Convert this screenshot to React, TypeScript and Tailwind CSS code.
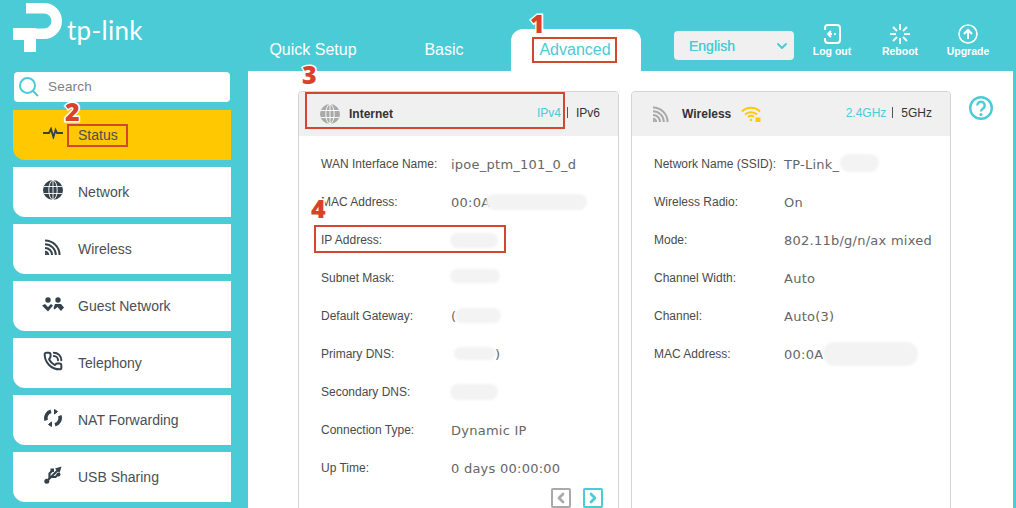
import { useState } from "react";
import { ChevronDown, ChevronLeft, ChevronRight, PhoneCall } from "lucide-react";

function GlobeIcon({ className }: { className?: string }) {
  return (
    <svg viewBox="0 0 20 20" className={className}>
      <circle cx="10" cy="10" r="10" fill="currentColor" />
      <g fill="none" stroke="white" strokeWidth="0.9">
        <ellipse cx="10" cy="10" rx="4.2" ry="9.6" />
        <path d="M10 0v20M0.6 6.5h18.8M0.6 13.5h18.8" />
      </g>
    </svg>
  );
}

function WifiCorner({ className }: { className?: string }) {
  return (
    <svg viewBox="0 0 17 17" className={className} fill="none" stroke="currentColor" strokeWidth="2.1">
      <path d="M0 1.500c8.500 0 15.500 7 15.500 15.500M0 5.500c6.300 0 11.500 5.200 11.500 11.500M0 9.500c4.100 0 7.500 3.400 7.500 7.500M0 13.500c1.900 0 3.500 1.600 3.500 3.500" />
      <rect x="0" y="15" width="2" height="2" fill="currentColor" stroke="none" />
    </svg>
  );
}

function ActivityIcon({ className }: { className?: string }) {
  return (
    <svg viewBox="0 0 20 12" className={className} fill="none" stroke="currentColor" strokeWidth="1.9">
      <path d="M0 6h6l2-4 2.400 8 2.200-7 1.400 3h6" />
    </svg>
  );
}

function GuestIcon({ className }: { className?: string }) {
  return (
    <svg viewBox="0 0 22 15" className={className} fill="currentColor">
      <circle cx="6" cy="3" r="2.700" />
      <circle cx="16" cy="3" r="2.700" />
      <path d="M0 8.500l3-1.500 3 3 3-3 2 1.500-5 6z" />
      <path d="M22 10.500l-3-3.500h-6l-1.500 4 1 1.500 3-2.500 3.500 4z" />
    </svg>
  );
}

function NatIcon({ className }: { className?: string }) {
  return (
    <svg viewBox="0 0 18 18" className={className} fill="none" stroke="currentColor" strokeWidth="3.600">
      <path d="M7 2.300a7 7 0 0 0-4.800 9" />
      <path d="M11 15.700a7 7 0 0 0 4.800-9" />
      <path d="M10.500 0.500l3 2-3 2.500z" fill="currentColor" strokeWidth="1" />
      <path d="M7.500 17.500l-3-2 3-2.500z" fill="currentColor" strokeWidth="1" />
    </svg>
  );
}

function UsbIcon({ className }: { className?: string }) {
  return (
    <svg viewBox="0 0 18 18" className={className} fill="none" stroke="currentColor" strokeWidth="2.200">
      <path d="M3 15L13.500 4.500" />
      <path d="M5.500 12.500V7.500L8 5" />
      <path d="M7 11h4.500L14 8.500" />
      <circle cx="2.800" cy="15.200" r="2.500" fill="currentColor" stroke="none" />
      <path d="M11 2.500L17.500 0.500 15.500 7z" fill="currentColor" stroke="none" />
      <rect x="6.500" y="2.500" width="3.500" height="3.500" fill="currentColor" stroke="none" />
      <circle cx="14.500" cy="8.500" r="2" fill="currentColor" stroke="none" />
    </svg>
  );
}

const menuItems = [
  { label: "Status", icon: <ActivityIcon className="w-5 h-3" />, active: true },
  { label: "Network", icon: <GlobeIcon className="w-5 h-5" /> },
  { label: "Wireless", icon: <WifiCorner className="w-4 h-4" /> },
  { label: "Guest Network", icon: <GuestIcon className="w-[22px] h-[15px]" /> },
  { label: "Telephony", icon: <PhoneCall className="w-5 h-5" strokeWidth={2.4} /> },
  { label: "NAT Forwarding", icon: <NatIcon className="w-[18px] h-[18px]" /> },
  { label: "USB Sharing", icon: <UsbIcon className="w-[18px] h-[18px]" /> },
];

function Smudge({ className }: { className: string }) {
  return <div className={`absolute bg-[#f3f3f3] rounded-full blur-[1px] ${className}`} />;
}

function InfoRow({ label, value, children }: { label: string; value?: string; children?: React.ReactNode }) {
  return (
    <div className="flex items-center h-[38px]">
      <div className="w-[130px] shrink-0 text-xs text-[#4a4a4a] -mt-[2px] whitespace-nowrap">{label}</div>
      <div className="relative flex-1 font-['DejaVu_Sans',sans-serif] text-[13px] tracking-[0.25px] text-[#666] whitespace-nowrap">
        {value ?? "\u00a0"}
        {children}
      </div>
    </div>
  );
}

function CardHead({ title, icon, extra, left, right }: { title: string; icon: React.ReactNode; extra?: React.ReactNode; left: string; right: string }) {
  return (
    <div className="h-[44px] bg-[#f0f0f0] flex items-center pl-[21px] pr-[18px] rounded-t-[4px]">
      <div className="w-[20px] text-[#a9a9a9]">{icon}</div>
      <div className="ml-[9px] text-xs font-bold text-[#333]">{title}</div>
      {extra}
      <div className="ml-auto flex items-center text-xs text-[#333] -mt-[3px]">
        <span className="text-[#4acbd6]">{left}</span>
        <span className="ml-[6px] mr-[8px] w-[1px] h-[11px] bg-[#555]" />
        <span>{right}</span>
      </div>
    </div>
  );
}

const redBox = "absolute border-2 border-[#d4472f] pointer-events-none";
const badge =
  "absolute font-['Open_Sans',sans-serif] font-extrabold text-[25px] leading-none text-[#d8412c] [-webkit-text-stroke:3px_white] [paint-order:stroke_fill]";

export default function App() {
  const [tab] = useState("Advanced");

  return (
    <div className="relative w-[1016px] h-[508px] overflow-hidden bg-[#4acbd6] font-['Liberation_Sans',sans-serif]">
      {/* Header */}
      <div className="flex h-[71px]">
        <div className="w-[248px] shrink-0 pl-[13px] pt-[3px] flex items-start">
          <svg viewBox="0 0 50 50" className="w-[50px] h-[50px] shrink-0" fill="white">
            <path d="M13 0H31A18 18 0 0 1 31 36H23V25.500H31A7.500 7.500 0 0 0 31 10.500H13Z" />
            <path d="M0 25H23V49H11V37H0Z" />
          </svg>
          <span className="ml-[4px] mt-[9px] font-['Lato',sans-serif] font-normal text-[26px] leading-[36px] tracking-[0.3px] text-white">
            tp-link
          </span>
        </div>
        <div className="flex items-end gap-[1px]">
          {["Quick Setup", "Basic"].map((t) => (
            <div key={t} className="w-[130px] h-[42px] flex items-center justify-center text-base text-white">
              {t}
            </div>
          ))}
          <div className="ml-[1px] w-[130px] h-[42px] bg-white rounded-t-[12px] flex items-center justify-center text-base text-[#4acbd6] pr-[2px]">
            {tab}
          </div>
        </div>
        <div className="ml-[33px] mt-[31px] w-[120px] h-[29px] rounded-[4px] bg-[#f0f0f0] flex items-center justify-between pl-[15px] pr-[4px] text-sm font-bold text-[#4acbd6]">
          <span className="font-normal [text-shadow:0_0_0.4px_#4acbd6]">English</span>
          <ChevronDown className="w-4 h-4" strokeWidth={3} />
        </div>
        <div className="flex ml-[4px] pt-[23px]">
          {[
            {
              label: "Log out",
              icon: (
                <svg viewBox="0 0 18 20" className="w-[18px] h-[20px]" fill="none" stroke="white" strokeWidth="2">
                  <path d="M5 1h9a3 3 0 0 1 3 3v12a3 3 0 0 1-3 3H5a3 3 0 0 1-3-3v-2M2 6V4a3 3 0 0 1 3-3" />
                  <path d="M8 7l-3 3 3 3M6 10h3M11 10h2" />
                </svg>
              ),
            },
            {
              label: "Reboot",
              icon: (
                <svg viewBox="0 0 20 20" className="w-5 h-5" fill="none" stroke="white" strokeWidth="2">
                  <path d="M10 0v6M10 14v6M0 10h6M14 10h6M3 3l4 4M13 13l4 4M17 3l-4 4M7 13l-4 4" />
                </svg>
              ),
            },
            {
              label: "Upgrade",
              icon: (
                <svg viewBox="0 0 20 20" className="w-5 h-5" fill="none" stroke="white" strokeWidth="1.600">
                  <circle cx="10" cy="10" r="9" />
                  <path d="M6 10l4-4 4 4M10 7v8" strokeWidth="2" />
                </svg>
              ),
            },
          ].map((a) => (
            <div key={a.label} className="w-[68px] flex flex-col items-center">
              <div className="h-[21px] flex items-center">{a.icon}</div>
              <div className="text-[10.5px] font-bold text-white">{a.label}</div>
            </div>
          ))}
        </div>
      </div>

      {/* Main */}
      <div className="flex h-[437px]">
        <div className="w-[248px] shrink-0">
          <div className="ml-[14px] mt-[1px] w-[216px] h-[30px] bg-white rounded-[4px] flex items-center pl-[5px]">
            <svg viewBox="0 0 20 20" className="w-[20px] h-[20px]" fill="none" stroke="#4acbd6" strokeWidth="2">
              <circle cx="8.500" cy="8.500" r="7.500" />
              <path d="M14 14l5 5" />
            </svg>
            <span className="ml-[9px] mt-[1px] text-[13.5px] text-[#808080] tracking-[0.2px]">Search</span>
          </div>
          <div className="mt-[8px] ml-[13px] w-[218px] flex flex-col gap-[7px]">
            {menuItems.map((m) => (
              <div
                key={m.label}
                className={`h-[50px] rounded-bl-[12px] flex text-sm text-[#4a4f55] pt-[14px] ${
                  m.active ? "bg-[#ffc800]" : "bg-white"
                }`}
              >
                <div className="w-[30px] ml-[25px] h-[20px] flex items-center justify-center text-[#36424b] -mt-[1px]">
                  {m.icon}
                </div>
                <span className="ml-[10px] mt-[1px]">{m.label}</span>
              </div>
            ))}
          </div>
        </div>

        <div className="flex-1 mr-[3px] bg-white flex pl-[50px] pt-[20px] gap-[12px]">
          {/* Internet */}
          <div className="w-[321px] h-[440px] shrink-0 border border-[#d4d4d4] rounded-t-[4px]">
            <CardHead title="Internet" left="IPv4" right="IPv6" icon={<GlobeIcon className="w-5 h-5" />} />
            <div className="pl-[22px] pt-[10px]">
              <InfoRow label="WAN Interface Name:" value="ipoe_ptm_101_0_d" />
              <InfoRow label="MAC Address:" value="00:0A">
                <Smudge className="left-[35px] top-[1px] w-[101px] h-[16px]" />
              </InfoRow>
              <InfoRow label="IP Address:">
                <Smudge className="-left-[1px] top-[2px] w-[48px] h-[15px]" />
              </InfoRow>
              <InfoRow label="Subnet Mask:">
                <Smudge className="-left-[1px] top-[0px] w-[50px] h-[14px]" />
              </InfoRow>
              <InfoRow label="Default Gateway:" value="(">
                <Smudge className="left-[4px] top-[1px] w-[46px] h-[15px]" />
              </InfoRow>
              <InfoRow label="Primary DNS:">
                <Smudge className="left-[3px] top-[2px] w-[42px] h-[13px]" />
                <span className="absolute left-[44px] top-0">)</span>
              </InfoRow>
              <InfoRow label="Secondary DNS:">
                <Smudge className="-left-[1px] top-[1px] w-[48px] h-[16px]" />
              </InfoRow>
              <InfoRow label="Connection Type:" value="Dynamic IP" />
              <InfoRow label="Up Time:" value="0 days 00:00:00" />
              <div className="flex justify-end gap-[12px] pr-[15px]">
                <div className="w-[20px] h-[20px] border-2 border-[#a9a9a9] rounded-[2px] flex items-center justify-center text-[#a9a9a9]">
                  <ChevronLeft className="w-4 h-4" strokeWidth={4} />
                </div>
                <div className="w-[20px] h-[20px] border-2 border-[#4acbd6] rounded-[2px] flex items-center justify-center text-[#4acbd6]">
                  <ChevronRight className="w-4 h-4" strokeWidth={4} />
                </div>
              </div>
            </div>
          </div>

          {/* Wireless */}
          <div className="w-[320px] h-[440px] shrink-0 border border-[#d4d4d4] rounded-t-[4px]">
            <CardHead
              title="Wireless"
              left="2.4GHz"
              right="5GHz"
              icon={<WifiCorner className="w-4 h-4" />}
              extra={
                <svg viewBox="0 0 20 16" className="ml-[10px] w-[20px] h-[16px] -mt-[1px]" fill="none" stroke="#ffc800" strokeWidth="2">
                  <path d="M1 5.500c5-5 13-5 18 0M4 8.500c3.400-3 8.600-3 12 0M7 11c1.800-1.400 4.200-1.400 6 0" />
                  <circle cx="10" cy="14" r="1.300" fill="#ffc800" stroke="none" />
                  <rect x="14.500" y="11.500" width="5" height="4.500" fill="#ffc800" stroke="none" />
                </svg>
              }
            />
            <div className="pl-[22px] pt-[10px]">
              <InfoRow label="Network Name (SSID):" value="TP-Link_">
                <Smudge className="left-[56px] top-[-1px] w-[39px] h-[18px]" />
              </InfoRow>
              <InfoRow label="Wireless Radio:" value="On" />
              <InfoRow label="Mode:" value="802.11b/g/n/ax mixed" />
              <InfoRow label="Channel Width:" value="Auto" />
              <InfoRow label="Channel:" value="Auto(3)" />
              <InfoRow label="MAC Address:" value="00:0A">
                <Smudge className="left-[39px] top-[-3px] w-[95px] h-[24px]" />
              </InfoRow>
            </div>
          </div>

          <div className="ml-[6px] mt-[5px] shrink-0">
            <svg viewBox="0 0 24 24" className="w-[24px] h-[24px]" fill="none" stroke="#4acbd6" strokeWidth="2.400">
              <circle cx="12" cy="12" r="10.800" />
              <path d="M8.300 9.500a3.700 3.700 0 1 1 5.800 3c-1.400 1-2.100 1.500-2.100 3" />
              <circle cx="12" cy="18.500" r="1.500" fill="#4acbd6" stroke="none" />
            </svg>
          </div>
        </div>
      </div>

      {/* Annotations */}
      <div className={`${redBox} left-[532px] top-[37px] w-[85px] h-[26px]`} />
      <div className={`${redBox} left-[67px] top-[124px] w-[61px] h-[23px]`} />
      <div className={`${redBox} left-[305px] top-[92px] w-[260px] h-[37px]`} />
      <div className={`${redBox} left-[314px] top-[225px] w-[192px] h-[28px]`} />
      <span className={`${badge} left-[530px] top-[11px]`}>1</span>
      <span className={`${badge} left-[65px] top-[99px]`}>2</span>
      <span className={`${badge} left-[302px] top-[62px]`}>3</span>
      <span className={`${badge} left-[311px] top-[196px]`}>4</span>
    </div>
  );
}
